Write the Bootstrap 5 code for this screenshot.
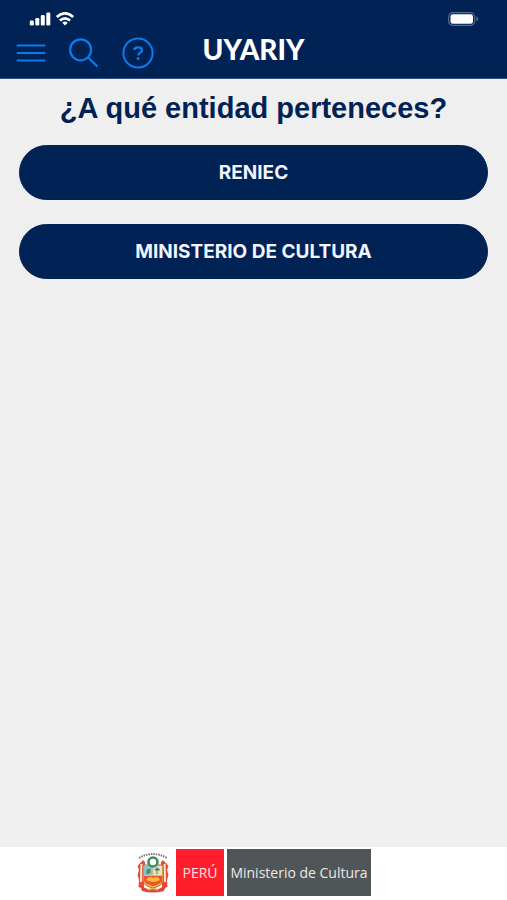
<!DOCTYPE html>
<html lang="es">
<head>
<meta charset="utf-8">
<meta name="viewport" content="width=device-width, initial-scale=1">
<title>UYARIY</title>
<link href="https://cdn.jsdelivr.net/npm/bootstrap@5.3.0/dist/css/bootstrap.min.css" rel="stylesheet">
<style>
  :root { --navy: #002255; --azure: #0a7cf0; }
  body { background: #efefef; font-family: "Liberation Sans", Arial, sans-serif; }
  .app-header { background: var(--navy); border-bottom: 1px solid #35507c; }
  .status-bar { padding: 12px 28px 0 29px; }
  .app-bar { height: 52px; padding: 2px 16px 0; }
  .tools { gap: 24px; flex: 1 1 0; }
  .icon-btn { color: var(--azure); line-height: 0; }
  .brand-name { font: 900 28px/32px Lato, sans-serif; padding-bottom: 8px; }
  .question { color: var(--navy); font-size: 29px; line-height: 36px; margin: 11px 0 19px; }
  .entities { gap: 24px; padding: 0 19px; }
  .entity-btn { --bs-btn-color: #f0f5ff; --bs-btn-bg: var(--navy); --bs-btn-border-color: var(--navy);
    --bs-btn-hover-color: #fff; --bs-btn-hover-bg: #0a3270; --bs-btn-active-bg: #0a3270; --bs-btn-active-color: #fff;
    height: 55px; font: 700 19px/24px Inter, sans-serif; }
  .app-footer { height: 53px; gap: 3px; padding: 2px 0 4px; font: 14px/20px "Open Sans", sans-serif; }
  .crest { margin-right: 3px; }
  .peru { background: #ff1e2b; color: #ffe3e3; width: 48px; }
  .ministry { background: #505558; color: #e8eaea; width: 144px; }
</style>
<script src="https://cdn.jsdelivr.net/npm/bootstrap@5.3.0/dist/js/bootstrap.bundle.min.js" defer></script>
</head>
<body class="d-flex flex-column min-vh-100">
<header class="app-header">
  <div class="status-bar d-flex justify-content-between" aria-hidden="true">
    <svg width="46" height="14" viewBox="0 0 46 14" fill="#fff">
      <rect x="0.800" y="8.500" width="4" height="5" rx="1.200"/><rect x="6.300" y="6" width="4" height="7.500" rx="1.200"/><rect x="11.800" y="3" width="4" height="10.500" rx="1.200"/><rect x="17.300" y="0.500" width="4" height="13" rx="1.200"/>
      <g fill="none" stroke="#fff" stroke-width="2.700"><path d="M27.800 5Q36-2.400 44.200 5"/><path d="M30.900 8.600Q36 4.100 41.100 8.600"/></g>
      <path d="M33.300 10.700Q36 8.400 38.700 10.700L36 13.600Z"/>
    </svg>
    <svg width="31" height="14" viewBox="0 0 31 14">
      <rect x="0.700" y="0.700" width="26" height="12.600" rx="4" fill="none" stroke="#526c94" stroke-width="1.200"/>
      <rect x="2.500" y="2.300" width="22.500" height="9.400" rx="2.200" fill="#fff"/>
      <path d="M28.300 4.800Q30.300 5.200 30.300 7T28.300 9.200Z" fill="#526c94"/>
    </svg>
  </div>
  <nav class="app-bar d-flex align-items-center" aria-label="Principal">
    <div class="tools d-flex align-items-center">
      <button type="button" class="icon-btn btn p-0 border-0" aria-label="Menú">
        <svg width="30" height="32" viewBox="0 0 30 32" stroke="currentColor" stroke-width="2.200" stroke-linecap="round"><path d="M1.600 8.500H28.400M1.600 16H28.400M1.600 23.500H28.400"/></svg>
      </button>
      <button type="button" class="icon-btn btn p-0 border-0" aria-label="Buscar">
        <svg class="overflow-visible" width="28" height="32" viewBox="0 0 28 32" fill="none" stroke="currentColor" stroke-width="2.200" stroke-linecap="round"><circle cx="10.600" cy="12.800" r="10.500"/><path d="M18.200 20.500L26.800 29"/></svg>
      </button>
      <button type="button" class="icon-btn btn p-0 border-0" aria-label="Ayuda">
        <svg width="32" height="32" viewBox="0 0 32 32" fill="none" stroke="currentColor" stroke-width="2"><circle cx="16" cy="16" r="14.600"/><path d="M12.200 13Q12.400 10.300 16 10.300Q20 10.300 20 13.200Q20 14.700 18.100 15.800Q16.200 17 16.200 18.600" stroke-width="2.300"/><circle cx="16.100" cy="21.600" r="1.500" fill="currentColor" stroke="none"/></svg>
      </button>
    </div>
    <span class="brand-name text-white">UYARIY</span>
    <div class="tools"></div>
  </nav>
</header>
<main class="flex-grow-1">
  <h1 class="question fw-bold text-center">¿A qué entidad perteneces?</h1>
  <div class="entities d-grid">
    <button type="button" class="entity-btn btn rounded-pill">RENIEC</button>
    <button type="button" class="entity-btn btn rounded-pill">MINISTERIO DE CULTURA</button>
  </div>
</main>
<footer class="app-footer bg-white d-flex justify-content-center align-items-stretch">
  <svg class="crest" width="34" height="47" viewBox="0 0 34 47" role="img" aria-label="Escudo del Perú">
    <path d="M3 9Q17 1 31 9" fill="none" stroke="#777" stroke-width="2" stroke-dasharray="1.500 1"/>
    <path d="M7 11L1.500 17L3 21L1.500 26L3 31L2.500 38L8 40L9 13Z" fill="#e84a3c"/>
    <path d="M27 11L32.500 17L31 21L32.500 26L31 31L31.500 38L26 40L25 13Z" fill="#e84a3c"/>
    <path d="M5.500 15L5 33M28.500 15L29 33" stroke="#ffe6d8" stroke-width="2"/>
    <path d="M7 16H27V32Q26 37 17 39Q8 37 7 32Z" fill="#f5bd48" stroke="#b86b33"/>
    <path d="M8 17H16.500V26H8Z" fill="#83c7cb"/><path d="M17.500 17H26V26H17.500Z" fill="#e4e6c9"/>
    <path d="M11 25V21L14 20V24M21 25V20M19 21Q21 17 23.500 21Z" fill="#6c884c" stroke="#55804c"/>
    <path d="M8 27H26V32Q25 35 17 37Q9 35 8 32Z" fill="#f05232"/>
    <path d="M10 31Q13 26 17 29Q22 26 24 31Q18 35 10 31Z" fill="#ffbd32"/>
    <circle cx="17" cy="13" r="4.500" fill="#fff" stroke="#3f8a64" stroke-width="2.600"/>
    <path d="M4 36Q10 41 17 40Q24 41 30 36L28 42Q17 45 6 42Z" fill="#dc4838"/>
    <path d="M12 41Q17 38 22 41" fill="none" stroke="#e5b35a" stroke-width="1.500"/>
  </svg>
  <div class="peru d-flex align-items-center justify-content-center">PERÚ</div>
  <div class="ministry d-flex align-items-center justify-content-center text-nowrap">Ministerio de Cultura</div>
</footer>
</body>
</html>
